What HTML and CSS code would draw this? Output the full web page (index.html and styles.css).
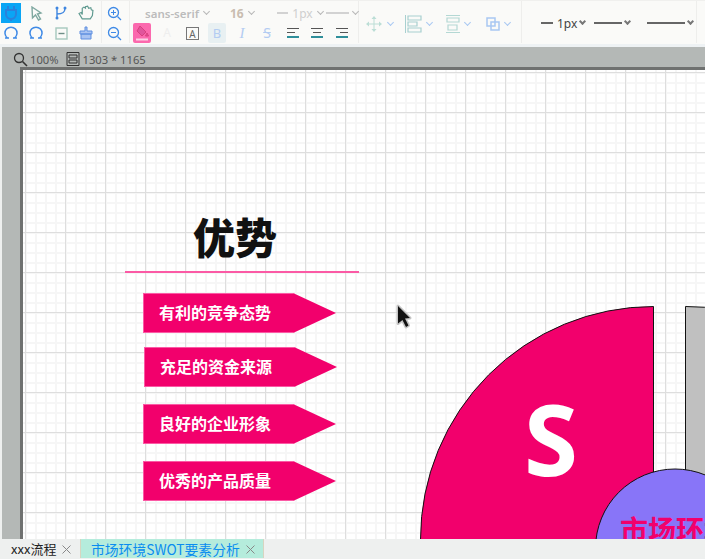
FILE: index.html
```html
<!DOCTYPE html>
<html lang="en">
<head>
	<meta charset="utf-8">
	<title>市场环境SWOT要素分析</title>
	<link rel="stylesheet" href="styles.css">
</head>

<body>
	<div class="toolbar">
		<div class="group tools">
			<span class="tool selected"><svg width="16" height="16" viewBox="0 0 16 16"><path d="M5 1v4M11 1v4M3 5h10v4a5 5 0 0 1-10 0zM8 14v2" fill="none" stroke="#2a82dc" stroke-width="2"/></svg></span>
			<span class="tool"><svg width="14" height="15" viewBox="0 0 14 15"><path d="M3 1l9 6-3.500 1 3 5-2 1-3-5-3 3z" fill="none" stroke="#7fa8a0" stroke-width="1.400"/></svg></span>
			<span class="tool"><svg width="14" height="14" viewBox="0 0 14 14"><path d="M3 2v10M3 8c5 0 8-1 8-6" fill="none" stroke="#3f86e0" stroke-width="1.400"/><circle cx="3" cy="2" r="1.500" fill="#3f86e0"/><circle cx="11" cy="2" r="1.500" fill="#3f86e0"/><circle cx="3" cy="12" r="1.500" fill="#3f86e0"/></svg></span>
			<span class="tool"><svg width="16" height="16" viewBox="0 0 15 15"><path d="M4 13L1 8l2-1 1 2V3l1.500-1L7 3V1.500L9 1l1 2 2-.5.500 2 1.500.5-.5 5-2 3z" fill="none" stroke="#5f9a90" stroke-width="1.100"/></svg></span>
			<span class="tool"><svg width="14" height="14" viewBox="0 0 14 14"><path d="M3.500 12A6 6 0 1 1 10.500 12M1 12h4M9 12h4" fill="none" stroke="#3f8ae6" stroke-width="1.500"/></svg></span>
			<span class="tool"><svg width="14" height="14" viewBox="0 0 14 14"><path d="M3.500 12A6 6 0 1 1 10.500 12M1 12h4M9 12h4" fill="none" stroke="#3f8ae6" stroke-width="1.500"/></svg></span>
			<span class="tool"><svg width="13" height="13" viewBox="0 0 13 13"><rect x="1" y="1" width="11" height="11" fill="none" stroke="#a5c8be" stroke-width="1.400"/><path d="M3.500 6.500h6" stroke="#6f8f88" stroke-width="1.400"/></svg></span>
			<span class="tool"><svg width="14" height="14" viewBox="0 0 14 14"><path d="M6 1h2v4h5v3H1V5h5zM2 8h10v5H2z" fill="#a9c4f2" stroke="#5f8fe0"/></svg></span>
		</div>
		<div class="group zoom">
			<span class="tool"><svg width="15" height="15" viewBox="0 0 15 15"><circle cx="6.500" cy="6.500" r="5" fill="none" stroke="#3f8ae6" stroke-width="1.300"/><path d="M10.500 10.500L14 14" stroke="#3f8ae6" stroke-width="1.300"/><path d="M4 6.500h5M6.500 4v5" stroke="#3f8ae6"/></svg></span>
			<span class="tool"><svg width="15" height="15" viewBox="0 0 15 15"><circle cx="6.500" cy="6.500" r="5" fill="none" stroke="#3f8ae6" stroke-width="1.300"/><path d="M10.500 10.500L14 14" stroke="#3f8ae6" stroke-width="1.300"/><path d="M4 6.500h5" stroke="#3f8ae6"/></svg></span>
		</div>
		<div class="group font">
			<div class="row">
				<span class="font-name">sans-serif</span><span class="caret"></span>
				<span class="font-size">16</span><span class="caret"></span>
				<span class="dash"></span><span class="px">1px</span><span class="caret"></span>
				<span class="dash long"></span><span class="caret"></span>
			</div>
			<div class="row">
				<span class="fill-btn"><svg width="16" height="17" viewBox="0 0 16 17"><path d="M6 1l6 6-4 4-5-5zM13 8l1.500 3h-3z" fill="#e0559c" stroke="#d9407f"/><path d="M2 14.500h12" stroke="#fbd0e4" stroke-width="2"/></svg></span>
				<span class="fmt faded">A</span>
				<span class="fmt boxed">A</span>
				<span class="fmt bold">B</span>
				<span class="fmt italic">I</span>
				<span class="fmt strike">S</span>
				<span class="align"><i></i><i class="short"></i><i class="teal"></i></span>
				<span class="align center"><i></i><i class="short"></i><i class="teal"></i></span>
				<span class="align right"><i></i><i class="short"></i><i class="teal"></i></span>
			</div>
		</div>
		<div class="group arrange">
			<span class="arr"><svg width="18" height="18" viewBox="0 0 18 18"><path d="M9 1l2.500 3h-5zM9 17l2.500-3h-5zM1 9l3-2.500v5zM17 9l-3-2.500v5z" fill="#bcded6"/><path d="M9 4v10M4 9h10" stroke="#bcded6"/></svg><span class="caret blue"></span></span>
			<span class="arr"><svg width="17" height="18" viewBox="0 0 17 18"><path d="M.5 0v18" stroke="#a8d0d0"/><path d="M3 1h13v4H3zM3 7h9v4H3zM3 13h13v4H3z" fill="none" stroke="#a8d0d0" stroke-width="1.200"/></svg><span class="caret blue"></span></span>
			<span class="arr"><svg width="16" height="18" viewBox="-2 0 16 18"><path d="M1 3h12v4H1zM2 10h9v5H2z" fill="none" stroke="#b4d8d4" stroke-width="1.200"/><path d="M0 .5h14M0 17.500h14" stroke="#b4d8d4"/></svg><span class="caret blue"></span></span>
			<span class="arr"><svg width="18" height="14" viewBox="-4 0 18 14"><rect x="1" y="1" width="8" height="8" fill="none" stroke="#a9c8f2" stroke-width="1.500"/><rect x="5" y="5" width="8" height="8" fill="none" stroke="#a9c8f2" stroke-width="1.500"/></svg><span class="caret blue"></span></span>
		</div>
		<div class="group line">
			<span class="dash dark"></span><span class="line-px">1px</span><span class="caret dark-caret"></span>
			<span class="dash dark wide"></span><span class="caret dark-caret"></span>
			<span class="dash dark wider"></span><span class="caret dark-caret"></span>
		</div>
	</div>

	<div class="infobar">
		<svg class="zoom-icon" width="15" height="15" viewBox="0 0 15 15"><circle cx="6" cy="6" r="4.500" fill="none" stroke="#333" stroke-width="1.300"/><path d="M9.500 9.500L14 14" stroke="#333" stroke-width="1.600"/></svg>
		<span>100%</span>
		<svg class="size-icon" width="14" height="14" viewBox="0 0 14 14"><path d="M1 .5h12v13H1zM3 3h8v3H3zM3 8h8v3H3z" fill="none" stroke="#333"/></svg>
		<span>1303 * 1165</span>
	</div>

	<div class="workspace">
		<div class="canvas">
			<h2 class="title">优势</h2>
			<div class="title-line"></div>
			<div class="tag t1">有利的竞争态势</div>
			<div class="tag t2">充足的资金来源</div>
			<div class="tag t3">良好的企业形象</div>
			<div class="tag t4">优秀的产品质量</div>
			<svg class="chart" width="682" height="469" viewBox="0 0 682 469">
				<path d="M630.500 236.500A233 233 0 0 0 397.500 469.500H630.500z" fill="#f2006c" stroke="#111"/>
				<path d="M662.500 469.500V236.500A233 233 0 0 1 700 239.500V469.500z" fill="#c0c0c0" stroke="#111"/>
				<circle cx="652" cy="478.500" r="79.500" fill="#8875f8" stroke="#111"/>
				<text x="501" y="406" class="letter">S</text>
				<text x="597" y="471" class="center-text">市场环境</text>
			</svg>
			<svg class="cursor" width="20" height="26" viewBox="0 0 20 26"><path d="M3 2l12 12-5 .5 3.500 7-2.500 1.500-3.500-7L3 19.500z" fill="#111" stroke="#c4c4c4" stroke-width="3" paint-order="stroke" stroke-linejoin="round"/></svg>
		</div>
	</div>

	<div class="tabs">
		<div class="tab">xxx流程<svg class="close" width="9" height="9" viewBox="0 0 9 9"><path d="M.5.500l8 8M8.500.500l-8 8" stroke="#888"/></svg></div>
		<div class="tab active">市场环境SWOT要素分析<svg class="close" width="9" height="9" viewBox="0 0 9 9"><path d="M.5.500l8 8M8.500.500l-8 8" stroke="#888"/></svg></div>
	</div>
</body>

</html>
```
FILE: styles.css
```css
html, body {
	margin: 0;
	height: 100%;
	overflow: hidden;
}

body {
	display: flex;
	flex-direction: column;
	width: 705px;
	height: 559px;
	font-family: "Noto Sans", "Noto Sans CJK SC", sans-serif;
	background: #eef0ef;
}

.toolbar {
	display: flex;
	height: 43px;
	padding-top: 1px;
	padding-bottom: 3px;
	background: #fafaf8;
	box-shadow: inset 0 1px 0 #f0f0ee, inset 0 -3px 0 #eef2f4;
	flex: none;
}

.group {
	border-right: 1px solid #eeeeec;
	height: 42px;
	box-sizing: border-box;
}

.tools {
	display: grid;
	grid-template-columns: repeat(4, 25px);
	grid-auto-rows: 20px;
	width: 102px;
	align-content: start;
	padding-top: 2px;
}

.tool {
	display: flex;
	align-items: center;
	justify-content: center;
	width: 20px;
	height: 20px;
	margin-left: 1px;
}

.selected {
	background: #0aa5f5;
}

.zoom {
	display: grid;
	grid-auto-rows: 20px;
	width: 28px;
	padding: 2px 0 0 1px;
}

.font {
	width: 229px;
	padding-left: 3px;
	padding-top: 2px;
}

.row {
	display: flex;
	align-items: center;
	height: 20px;
}

.font-name {
	width: 54px;
	margin-left: 12px;
	font-size: 11.500px;
	font-weight: 600;
	white-space: nowrap;
	color: #bcbcbc;
}

.font-size {
	margin-left: 21px;
	font-size: 12px;
	font-weight: 700;
	color: #c9bdb0;
}

.px {
	font-size: 12px;
	color: #cfcfcf;
}

.caret {
	display: inline-block;
	width: 4px;
	height: 4px;
	margin-left: 5px;
	margin-top: -3px;
	border-right: 1px solid #b8b8b8;
	border-bottom: 1px solid #b8b8b8;
	transform: rotate(45deg);
}

.caret.blue {
	border-color: #a9c8f2;
}

.dark-caret {
	width: 3px;
	height: 3px;
	margin-left: 3px;
	border-color: #777;
	border-width: 0 2px 2px 0;
}

.dash {
	display: inline-block;
	width: 12px;
	height: 2px;
	margin-left: 23px;
	margin-right: 4px;
	background: #d2d2d2;
}

.dash.long {
	width: 24px;
	margin-left: 3px;
	margin-right: -1px;
}

.dash.dark {
	margin-left: 0;
	background: #666;
}

.dash.wide {
	width: 28px;
	margin-left: 9px;
	margin-right: 0;
}

.dash.wider {
	width: 38px;
	margin-left: 17px;
	margin-right: 0;
}

.fill-btn {
	display: flex;
	align-items: center;
	justify-content: center;
	width: 18px;
	height: 20px;
	background: #fb69ae;
	border-radius: 2px;
}

.fmt {
	display: inline-block;
	width: 18px;
	height: 20px;
	line-height: 20px;
	margin-left: 7px;
	text-align: center;
	font-size: 12px;
	color: #666;
}

.faded {
	color: #eeeeee;
}

.boxed {
	width: 13px;
	height: 13px;
	line-height: 12px;
	margin-left: 10px;
	font-size: 10px;
	border: 1px solid #777;
	box-sizing: border-box;
}

.bold {
	margin-left: 9px;
	font-size: 13px;
	color: #b3ccf2;
	background: #e8f0f2;
	border-radius: 2px;
}

.italic {
	font-family: "Liberation Serif", serif;
	font-style: italic;
	font-size: 15px;
	color: #b3ccf2;
}

.strike {
	font-size: 14px;
	color: #b3ccf2;
	text-decoration: line-through;
}

.align {
	display: flex;
	flex-direction: column;
	align-items: flex-start;
	gap: 3px;
	width: 12px;
	margin-left: 11px;
}

.align.center {
	align-items: center;
	margin-left: 12px;
}

.align.right {
	align-items: flex-end;
	margin-left: 13px;
}

.align i {
	display: block;
	width: 12px;
	height: 1px;
	background: #555;
}

.align i.short {
	width: 8px;
}

.align i.teal {
	height: 2px;
	background: #2f8f9a;
}

.arrange {
	display: flex;
	align-items: center;
	gap: 12px;
	width: 163px;
	padding-left: 6px;
	padding-top: 3px;
}

.arr {
	display: flex;
	align-items: center;
}

.line {
	display: flex;
	align-items: center;
	width: 175px;
	padding-left: 19px;
	padding-top: 2px;
}

.line-px {
	font-size: 12px;
	color: #444;
}

.infobar {
	display: flex;
	align-items: center;
	flex: none;
	height: 20px;
	box-sizing: border-box;
	padding: 4px 0 0 11px;
	margin-left: 2px;
	font-size: 11.200px;
	color: #555;
	background: #b4b8b6;
}

.zoom-icon {
	margin-right: 2px;
}

.size-icon {
	margin-left: 7px;
	margin-right: 3px;
}

.workspace {
	flex: 1;
	margin-left: 2px;
	padding-left: 18px;
	background: #b4b8b6;
	min-height: 0;
}

.canvas {
	position: relative;
	height: 100%;
	box-sizing: border-box;
	border-top: 3px solid #6f7170;
	border-left: 3px solid #6f7170;
	overflow: hidden;
	background-color: #fff;
	background-image:
		linear-gradient(#dedede 1px, transparent 1px),
		linear-gradient(90deg, #dedede 1px, transparent 1px),
		linear-gradient(#f6f6f6 2px, transparent 2px),
		linear-gradient(90deg, #f6f6f6 2px, transparent 2px);
	background-size: 40px 40px, 40px 40px, 10px 10px, 10px 10px;
	background-position: 2px 2px, 2px 2px, 2px 2px, 2px 2px;
}

.title {
	position: absolute;
	left: 170px;
	top: 141px;
	margin: 0;
	font-size: 42px;
	line-height: 50px;
	font-weight: 900;
	color: #111;
	font-family: "Noto Sans CJK SC", sans-serif;
}

.title-line {
	position: absolute;
	left: 102px;
	top: 201px;
	width: 234px;
	height: 2px;
	background: #fb5aa5;
}

.tag {
	position: absolute;
	left: 120px;
	width: 193px;
	height: 40px;
	padding-left: 16px;
	box-sizing: border-box;
	line-height: 39px;
	font-size: 16px;
	font-weight: 700;
	color: #fff;
	background: #f2006c;
	box-shadow: inset 1px 1px 0 #fb5aa5, inset 0 -1px 0 #fb5aa5;
	clip-path: polygon(0 0, 150px 0, 100% 50%, 150px 100%, 0 100%);
	font-family: "Noto Sans CJK SC", sans-serif;
}

.t1 { top: 223px; }
.t2 { top: 277px; left: 121px; }
.t3 { top: 334px; }
.t4 { top: 391px; }

.chart {
	position: absolute;
	left: 0;
	top: 0;
}

.letter {
	font-size: 98px;
	font-weight: 700;
	fill: #fff;
	font-family: "Noto Sans", sans-serif;
}

.center-text {
	font-size: 28px;
	font-weight: 700;
	fill: #f2006c;
	font-family: "Noto Sans CJK SC", sans-serif;
}

.cursor {
	position: absolute;
	left: 372px;
	top: 234px;
}

.tabs {
	display: flex;
	flex: none;
	height: 20px;
	box-sizing: border-box;
	background: #eef0ef;
	font-size: 13px;
	font-family: "Noto Sans CJK SC", sans-serif;
}

.tab {
	display: flex;
	align-items: center;
	height: 19px;
	padding-left: 11px;
	width: 81px;
	box-sizing: border-box;
	color: #222;
	border-right: 1px solid #d8d4c0;
}

.tab.active {
	width: 183px;
	padding-left: 10px;
	font-size: 13.800px;
	color: #0a8cf0;
	background: #b5ecdc;
}

.close {
	flex: none;
	margin-left: 6px;
	margin-top: 2px;
}
```
